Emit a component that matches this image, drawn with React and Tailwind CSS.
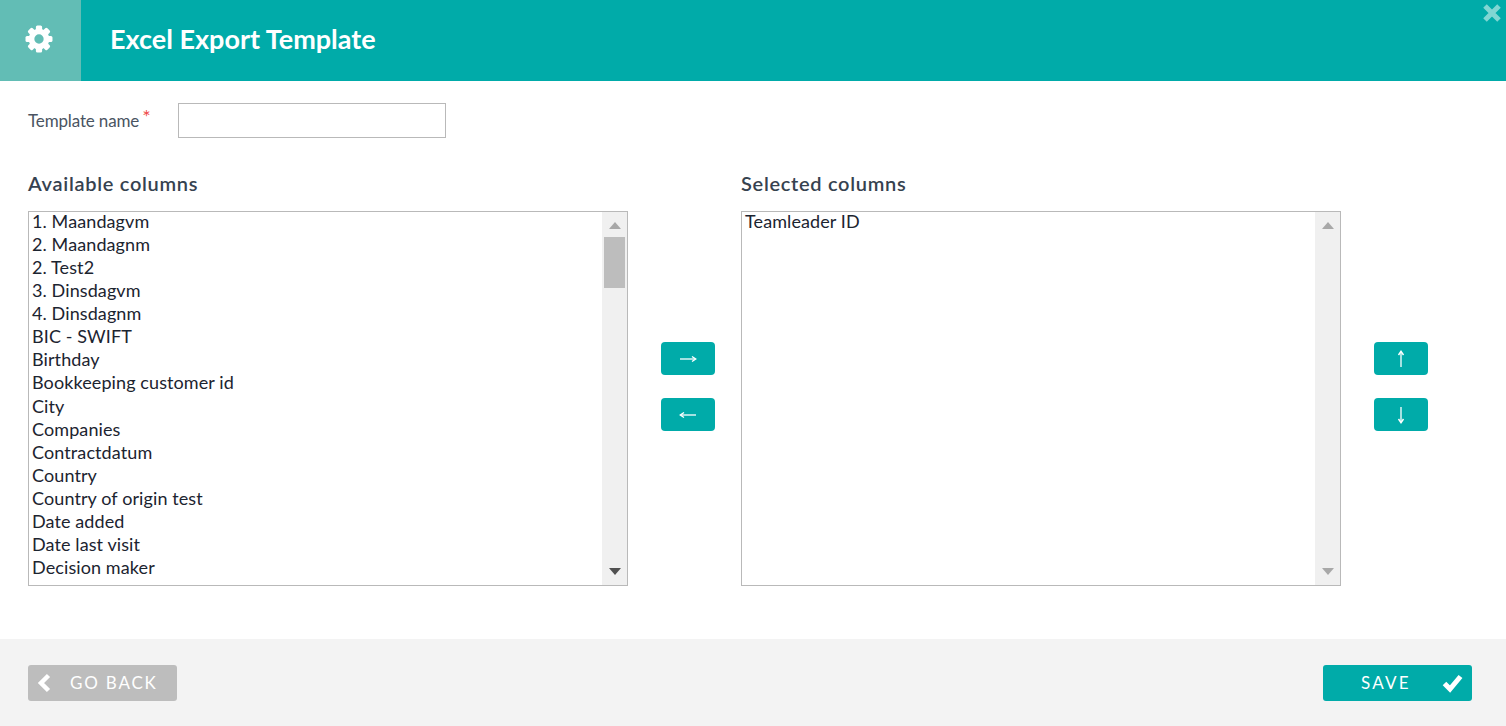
import React from "react";

const available = ["1. Maandagvm","2. Maandagnm","2. Test2","3. Dinsdagvm","4. Dinsdagnm","BIC - SWIFT","Birthday","Bookkeeping customer id","City","Companies","Contractdatum","Country","Country of origin test","Date added","Date last visit","Decision maker"];

function Gear() {
  const teeth = [0,45,90,135,180,225,270,315];
  return (
    <svg width="28" height="28" viewBox="0 0 27 27" fill="#fff">
      {teeth.map((a) => <rect key={a} x="10.5" y="0.5" width="6" height="7" rx="1.5" transform={`rotate(${a} 13.5 13.5)`} />)}
      <path fillRule="evenodd" d="M13.5 3.5a10 10 0 1 0 0 20a10 10 0 1 0 0-20zM13.5 9a4.5 4.5 0 1 1 0 9a4.5 4.5 0 1 1 0-9z" />
    </svg>
  );
}

function Arrow({ dir }) {
  const rot = { right: 0, left: 180, up: 270, down: 90 }[dir];
  return (
    <svg width="18" height="18" viewBox="0 0 18 18" fill="none" stroke="#fff" style={{ transform: `rotate(${rot}deg)` }}>
      <path d="M1 9H16" strokeWidth="1.3" />
      <path d="M13 6.5L16.7 9L13 11.5" strokeWidth="1.4" />
    </svg>
  );
}

function ListBox({ items, active }) {
  return (
    <div className="flex h-[375px] w-[600px] overflow-hidden border border-[#b9b9b9] bg-white">
      <ul className="-mt-[2px] flex-1 overflow-hidden pl-[3px] text-[18px] leading-[23.07px] tracking-[0.1px] text-[#1c2430]">
        {items.map((t) => <li key={t}>{t}</li>)}
      </ul>
      <div className="flex w-[25px] flex-col items-center bg-[#f0f0f0]">
        <svg className="mt-[10px]" width="12" height="7" viewBox="0 0 12 7"><path d="M6 0L12 7H0z" fill="#a8a8a8" /></svg>
        {active ? <div className="mt-[8px] h-[51px] w-[21px] bg-[#bdbdbd]" /> : null}
        <svg className="mt-auto mb-[10px]" width="12" height="7" viewBox="0 0 12 7"><path d="M0 0H12L6 7z" fill={active ? "#505050" : "#a8a8a8"} /></svg>
      </div>
    </div>
  );
}

function MoveButtons({ first, second }) {
  return (
    <div className="flex flex-col gap-[23px] pt-[131px]">
      <button className="flex h-[33px] w-[54px] items-center justify-center rounded-[4px] bg-[#00aba9]"><Arrow dir={first} /></button>
      <button className="flex h-[33px] w-[54px] items-center justify-center rounded-[4px] bg-[#00aba9]"><Arrow dir={second} /></button>
    </div>
  );
}

export default function App() {
  return (
    <div className="relative flex h-[726px] w-[1506px] flex-col overflow-hidden bg-white font-['Lato','Liberation_Sans',sans-serif]">
      <header className="flex h-[81px] items-center bg-[#00aba9] text-white">
        <div className="flex h-full w-[81px] items-center justify-center bg-[#62bdb5] pb-[4px] pr-[3px]"><Gear /></div>
        <h1 className="ml-[29px] pb-[3px] text-[27px] font-bold">Excel Export Template</h1>
      </header>
      <svg className="absolute right-[4px] top-[3px]" width="20" height="20" viewBox="0 0 20 20" fill="none" stroke="#80d6d3" strokeWidth="5" aria-label="Close">
        <path d="M3 3L17 17M17 3L3 17" />
      </svg>

      <main className="flex-1 px-[28px] pt-[22px]">
        <div className="flex items-center">
          <label className="w-[150px] text-[17px] tracking-[-0.15px] text-[#4a5462]">Template name<span className="relative top-[-3px] ml-[3px] text-[20px] leading-none text-[#ef4a4a]">*</span></label>
          <input className="h-[35px] w-[268px] border border-[#b9b9b9] bg-white" />
        </div>
        <div className="mt-[33px] flex">
          <section>
            <h2 className="mb-[14px] h-[26px] text-[20px] font-semibold leading-[24px] tracking-[0.7px] text-[#36424f]">Available columns</h2>
            <ListBox items={available} active />
          </section>
          <div className="mx-[33px] pt-[40px]"><MoveButtons first="right" second="left" /></div>
          <section className="ml-[-7px]">
            <h2 className="mb-[14px] h-[26px] text-[20px] font-semibold leading-[24px] tracking-[0.7px] text-[#36424f]">Selected columns</h2>
            <ListBox items={["Teamleader ID"]} />
          </section>
          <div className="ml-[33px] pt-[40px]"><MoveButtons first="up" second="down" /></div>
        </div>
      </main>

      <footer className="flex h-[87px] items-center justify-between bg-[#f3f3f3] pl-[28px] pr-[34px]">
        <button className="relative flex h-[36px] w-[149px] items-center rounded-[3px] bg-[#bdbdbd] pl-[42px] text-[17px] tracking-[1.8px] text-white">
          <svg className="absolute left-[9px] top-[8px]" width="14" height="20" viewBox="0 0 14 20" fill="none" stroke="#fff" strokeWidth="4.5"><path d="M11.5 2.5L4 10L11.5 17.5" /></svg>
          GO BACK
        </button>
        <button className="relative flex h-[36px] w-[149px] items-center rounded-[3px] bg-[#00aba9] pl-[38px] text-[17px] tracking-[2.2px] text-white">
          SAVE
          <svg className="absolute right-[9px] top-[8px]" width="21" height="20" viewBox="0 0 21 20" fill="none" stroke="#fff" strokeWidth="5"><path d="M2.5 10.5L8 16L18.5 3.5" /></svg>
        </button>
      </footer>
    </div>
  );
}
